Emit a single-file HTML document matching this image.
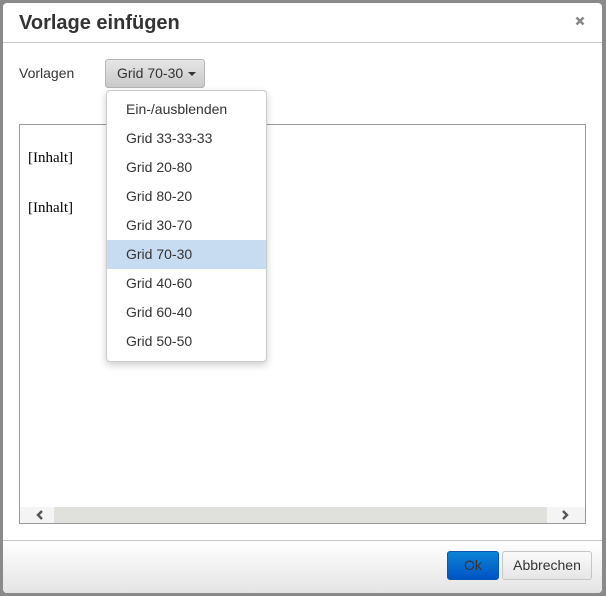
<!DOCTYPE html>
<html><head><style>
body{margin:0;width:606px;height:596px;background:#8a8a8a;font-family:"Liberation Sans",sans-serif;position:relative;overflow:hidden}
.dlg{position:absolute;left:3px;top:3px;width:599px;height:590px;background:#fff;border-radius:4px;overflow:hidden}
.title{position:absolute;left:16px;top:9px;font-size:20px;font-weight:bold;color:#333}
.x{position:absolute;left:572px;top:13px}
.hr{position:absolute;left:0;right:0;top:39px;height:1px;background:#c5c5c5}
.lbl{position:absolute;left:16px;top:62px;font-size:14px;color:#333}
.btn{position:absolute;left:102px;top:56px;width:100px;height:29px;border:1px solid #b5b5b5;border-radius:3px;background:linear-gradient(#e6e6e6,#c9c9c9);box-sizing:border-box;font-size:14px;color:#333;line-height:27px;padding-left:11px}
.caret{display:inline-block;border-left:4px solid transparent;border-right:4px solid transparent;border-top:4px solid #333;vertical-align:middle;margin-left:5px}
.area{position:absolute;left:16px;top:121px;width:567px;height:400px;border:1px solid #999;box-sizing:border-box;font-family:"Liberation Serif",serif;font-size:15px;color:#000}
.area p{position:absolute;left:8px;margin:0}
.sb{position:absolute;left:0;right:0;bottom:0;height:16px;background:#f4f4f4}
.sb .th{position:absolute;left:34px;right:38px;top:0;bottom:0;background:#e0e0dc}
.sb svg{position:absolute;top:3px}
.menu{position:absolute;left:103px;top:87px;width:161px;height:272px;background:#fff;border:1px solid #ccc;border-radius:4px;box-shadow:0 3px 8px rgba(0,0,0,.2);box-sizing:border-box}
.menu div{height:29px;line-height:29px;padding-left:19px;font-size:14px;color:#333}
.menu .sel{background:#c7dcf1}
.foot{position:absolute;left:0;right:0;top:537px;bottom:0;border-top:1px solid #c5c5c5;background:linear-gradient(#fff,#e4e4e4)}
.ok{position:absolute;left:444px;top:10px;width:52px;height:29px;background:linear-gradient(#0a84d6,#0053c5);border:1px solid #0a56b0;border-radius:3px;box-sizing:border-box;color:#333;font-size:14px;text-align:center;line-height:26px}
.ab{position:absolute;left:499px;top:10px;width:90px;height:29px;background:linear-gradient(#fafafa,#e6e6e6);border:1px solid #c5c5c5;border-radius:3px;box-sizing:border-box;color:#333;font-size:14px;text-align:center;line-height:26px}
</style></head><body>
<div class="dlg">
<div class="title">Vorlage einfügen</div>
<svg class="x" width="10" height="10" viewBox="0 0 10 10"><path d="M1.5 1.5L8.5 8.5M8.5 1.5L1.5 8.5" stroke="#888" stroke-width="2.6"/></svg>
<div class="hr"></div>
<div class="lbl">Vorlagen</div>
<div class="btn">Grid 70-30<span class="caret"></span></div>
<div class="area">
<p style="top:25px">[Inhalt]</p>
<p style="top:75px">[Inhalt]</p>
<div class="sb"><div class="th"></div>
<svg style="left:16px" width="8" height="10" viewBox="0 0 8 10"><path d="M6 1L2 5L6 9" stroke="#555" stroke-width="2.4" fill="none"/></svg>
<svg style="right:16px" width="8" height="10" viewBox="0 0 8 10"><path d="M2 1L6 5L2 9" stroke="#555" stroke-width="2.4" fill="none"/></svg>
</div>
</div>
<div class="menu">
<div style="margin-top:4px">Ein-/ausblenden</div>
<div>Grid 33-33-33</div>
<div>Grid 20-80</div>
<div>Grid 80-20</div>
<div>Grid 30-70</div>
<div class="sel">Grid 70-30</div>
<div>Grid 40-60</div>
<div>Grid 60-40</div>
<div>Grid 50-50</div>
</div>
<div class="foot"><div class="ok">Ok</div><div class="ab">Abbrechen</div></div>
</div>
</body></html>
